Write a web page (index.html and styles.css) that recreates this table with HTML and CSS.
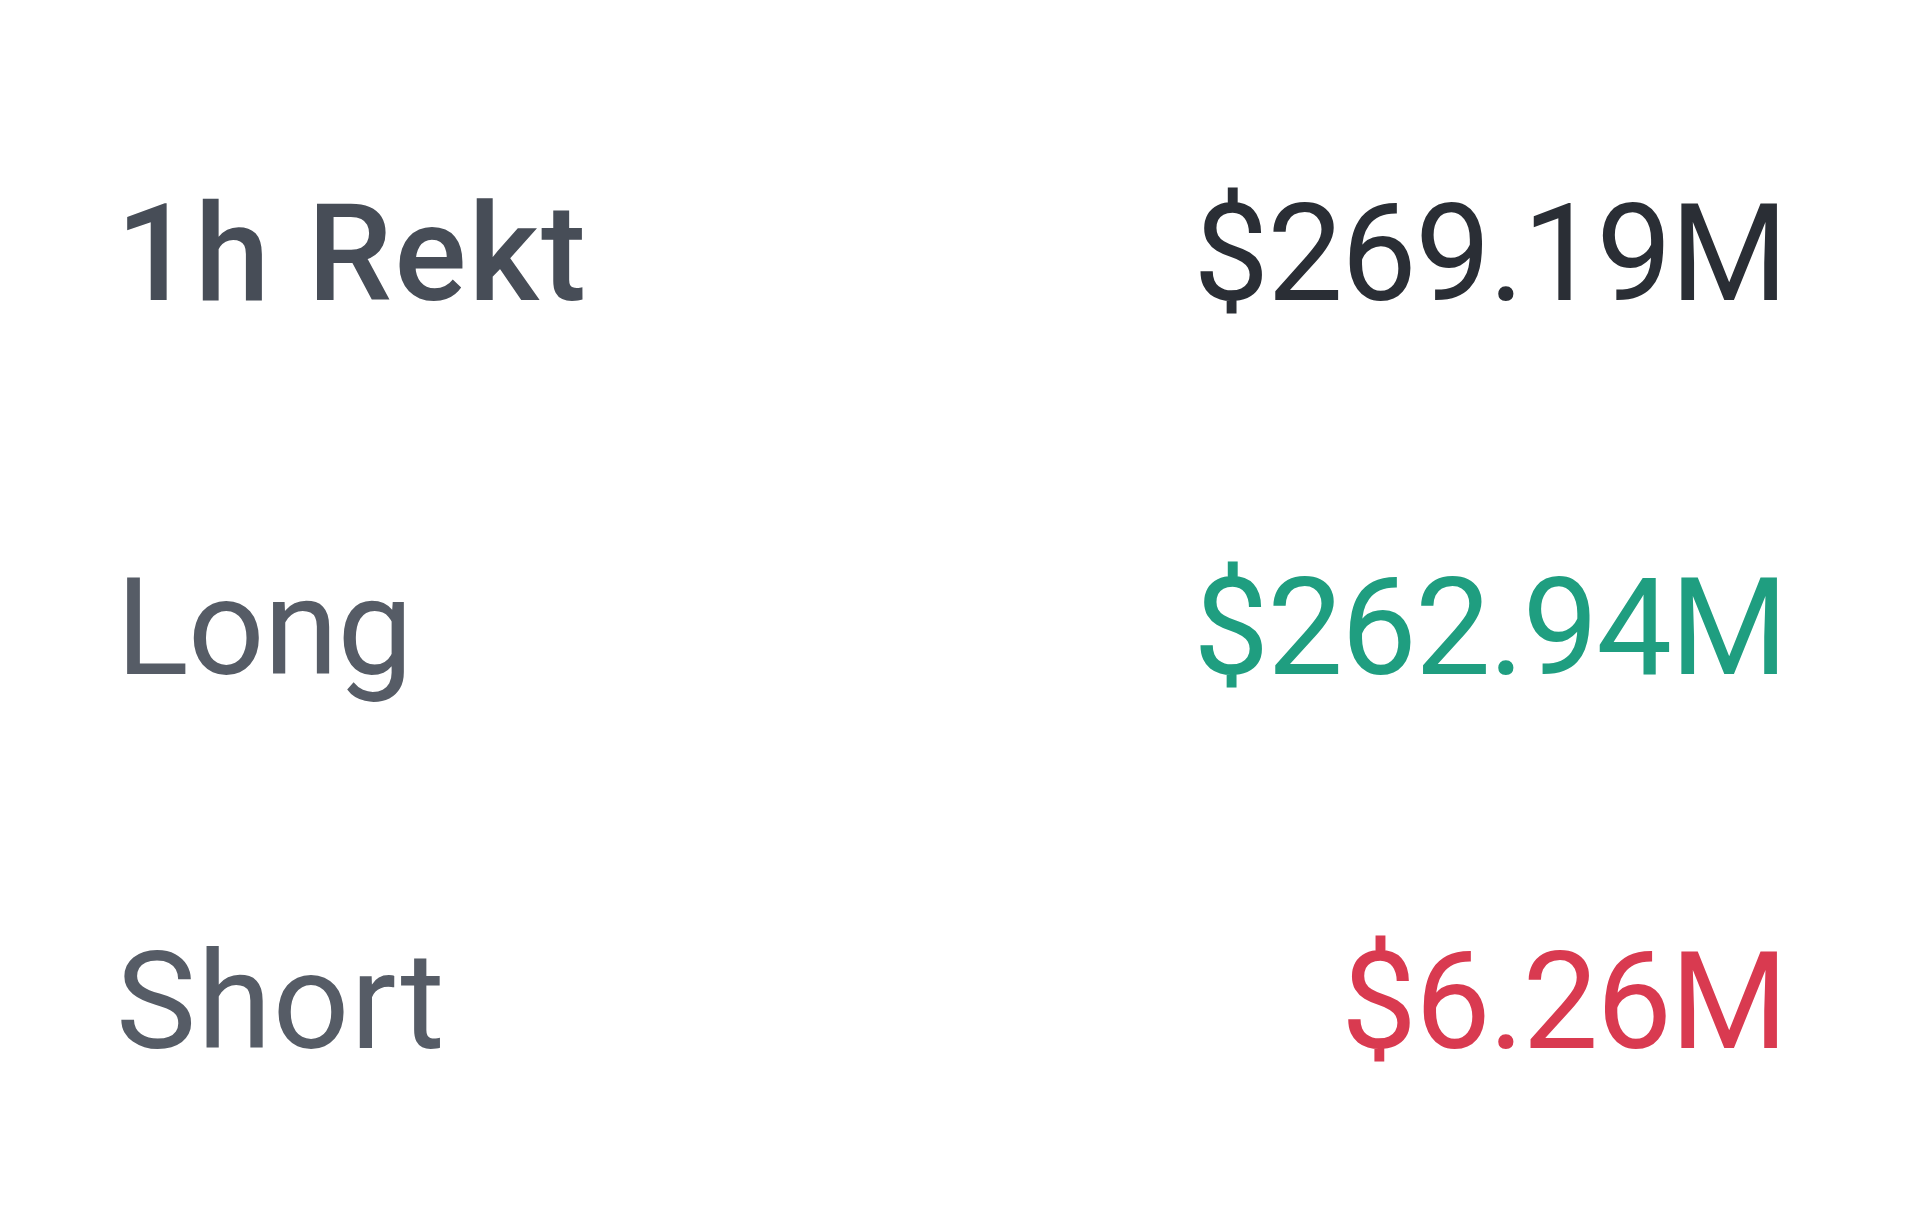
FILE: index.html
```html
<!DOCTYPE html>
<html lang="en">
<head>
<meta charset="utf-8">
<title>Rekt</title>
<link rel="stylesheet" href="styles.css">
</head>
<body>
<div class="stats">
  <div class="row">
    <span class="label label-strong">1h Rekt</span>
    <span class="value value-total">$269.19M</span>
  </div>
  <div class="row">
    <span class="label label-tight">Long</span>
    <span class="value value-long">$262.94M</span>
  </div>
  <div class="row">
    <span class="label">Short</span>
    <span class="value value-short">$6.26M</span>
  </div>
</div>
</body>
</html>
```
FILE: styles.css
```css
html, body {
  margin: 0;
  padding: 0;
  background: #ffffff;
}
body {
  width: 1920px;
  height: 1216px;
  overflow: hidden;
  font-family: Roboto, "Noto Sans", Arial, sans-serif;
}
.stats {
  display: flex;
  flex-direction: column;
  padding: 67px 134px 0 116px;
}
.row {
  height: 374px;
  display: flex;
  align-items: center;
  justify-content: space-between;
}
.label {
  font-size: 135px;
  line-height: 1;
  letter-spacing: 1px;
  color: #565c66;
  font-weight: 400;
}
.label-tight {
  letter-spacing: -1px;
}
.label-strong {
  color: #474d57;
  font-weight: 500;
  letter-spacing: 2px;
}
.value {
  font-size: 135px;
  line-height: 1;
  letter-spacing: -2px;
  font-weight: 400;
}
.value-total { color: #2a2e35; }
.value-long { color: #1f9e80; }
.value-short { color: #d93a50; }
```
